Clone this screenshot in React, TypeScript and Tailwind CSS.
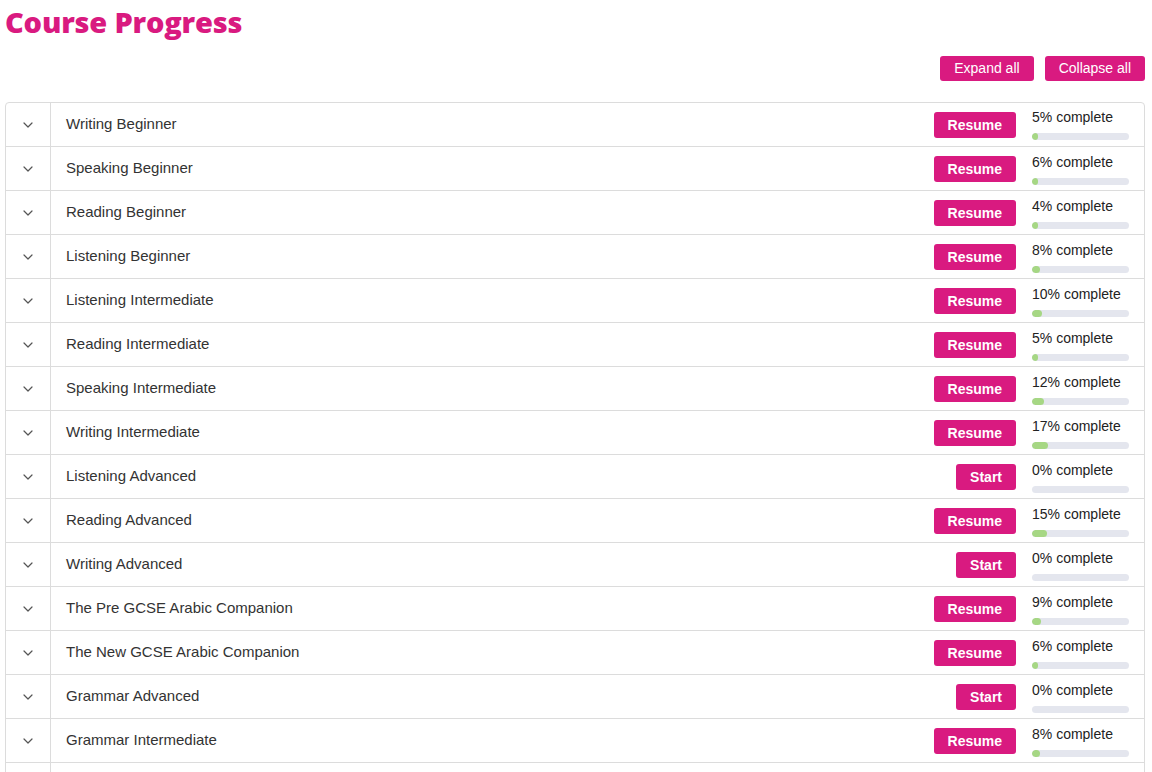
import React from "react";

const courses: { name: string; pct: number; started: boolean }[] = [
  { name: "Writing Beginner", pct: 5, started: true },
  { name: "Speaking Beginner", pct: 6, started: true },
  { name: "Reading Beginner", pct: 4, started: true },
  { name: "Listening Beginner", pct: 8, started: true },
  { name: "Listening Intermediate", pct: 10, started: true },
  { name: "Reading Intermediate", pct: 5, started: true },
  { name: "Speaking Intermediate", pct: 12, started: true },
  { name: "Writing Intermediate", pct: 17, started: true },
  { name: "Listening Advanced", pct: 0, started: false },
  { name: "Reading Advanced", pct: 15, started: true },
  { name: "Writing Advanced", pct: 0, started: false },
  { name: "The Pre GCSE Arabic Companion", pct: 9, started: true },
  { name: "The New GCSE Arabic Companion", pct: 6, started: true },
  { name: "Grammar Advanced", pct: 0, started: false },
  { name: "Grammar Intermediate", pct: 8, started: true },
];

function Chevron() {
  return (
    <svg width="10" height="6" viewBox="0 0 10 6" fill="none">
      <path d="M1 1l4 4 4-4" stroke="#555" strokeWidth="1.2" strokeLinecap="round" strokeLinejoin="round" />
    </svg>
  );
}

export default function App() {
  return (
    <div className="w-[1152px] h-[772px] overflow-hidden bg-white font-['Liberation_Sans',Arial,sans-serif] text-[#333]">
      <div className="px-[5px] pt-[4px]">
        <h1 className="font-['Open_Sans',sans-serif] font-extrabold text-[29px] leading-[36px] text-[#d91a80] tracking-[-0.2px]">
          Course Progress
        </h1>
        <div className="flex justify-end gap-[11px] mt-[16px] pr-[2px]">
          <button className="h-[25px] px-[14px] rounded-[3px] bg-[#d91a80] text-white text-[14px] leading-[25px]">
            Expand all
          </button>
          <button className="h-[25px] px-[14px] rounded-[3px] bg-[#d91a80] text-white text-[14px] leading-[25px]">
            Collapse all
          </button>
        </div>
        <div className="mt-[21px] w-[1140px] border border-[#dcdcdc] rounded-t-[4px]">
          {courses.map((c, i) => (
            <div
              key={c.name}
              className={`flex items-stretch ${i > 0 ? "h-[44px] border-t border-[#dcdcdc]" : "h-[43px]"}`}
            >
              <div className="w-[45px] flex items-center justify-center border-r border-[#dcdcdc]">
                <Chevron />
              </div>
              <div className="flex-1 flex items-center pl-[15px] text-[15px]">{c.name}</div>
              <div className="flex items-center">
                <button className="h-[26px] px-[14px] rounded-[3px] bg-[#d91a80] text-white text-[14px] font-bold leading-[26px]">
                  {c.started ? "Resume" : "Start"}
                </button>
              </div>
              <div className={`w-[128px] pl-[16px] ${i > 0 ? "pt-[7px]" : "pt-[6px]"}`}>
                <div className="text-[14px] leading-[16px] text-[#222]">{c.pct}% complete</div>
                <div className="mt-[8px] w-[97px] h-[7px] rounded-full bg-[#e4e6ee] overflow-hidden">
                  <div
                    className="h-full rounded-full bg-[#a6d784]"
                    style={{ width: `${Math.max(c.pct, c.pct > 0 ? 6 : 0)}%` }}
                  />
                </div>
              </div>
            </div>
          ))}
          <div className="flex h-[44px] border-t border-[#dcdcdc]">
            <div className="w-[45px] border-r border-[#dcdcdc]" />
            <div className="flex-1" />
          </div>
        </div>
      </div>
    </div>
  );
}
